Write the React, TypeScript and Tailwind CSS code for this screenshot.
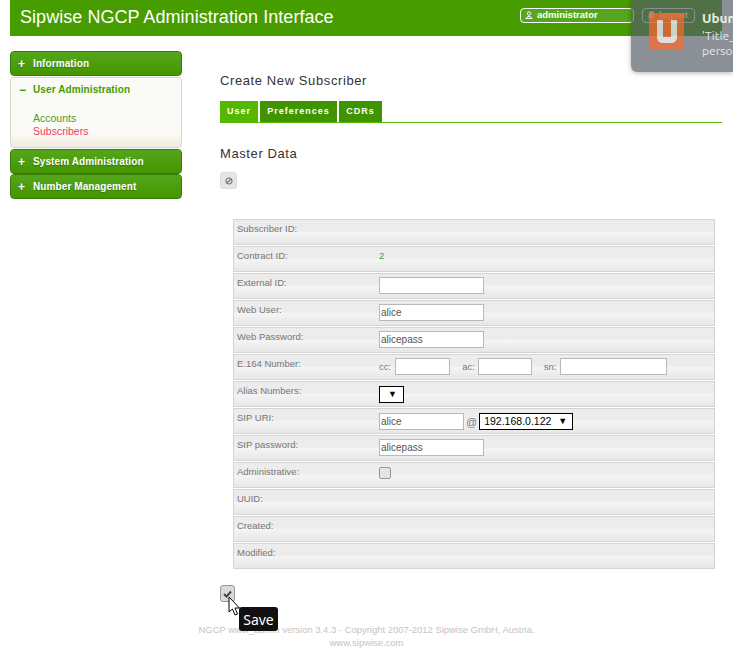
const font = "[font-family:'Liberation_Sans',Arial,sans-serif]";

function SideHead({ label }: { label: string }) {
  return (
    <div className="flex h-[25px] items-center rounded-[4px] border border-[#3a7d05] bg-[linear-gradient(#55a61c,#439600)] text-[10px] font-bold tracking-[0.1px] text-white [text-shadow:0_1px_1px_rgba(0,0,0,0.25)]">
      <span className="w-[22px] pl-[7px] text-[12px]">+</span>
      <span>{label}</span>
    </div>
  );
}

function Row({ label, children }: { label: string; children?: React.ReactNode }) {
  return (
    <div className="flex h-[26px] border border-[#d4d4d4] bg-[linear-gradient(#ececec_0%,#ececec_45%,#f4f4f4_52%,#e7e7e7_100%)] text-[9.5px] text-[#777]">
      <div className="w-[142px] pl-[3px] pt-[2px]">{label}</div>
      <div className="flex items-start pl-[3px] pt-[3px]">{children}</div>
    </div>
  );
}

function Field({ value, w }: { value?: string; w: string }) {
  return (
    <input
      readOnly
      value={value ?? ""}
      className={`h-[17px] border border-[#b8b8b8] bg-white px-px text-[10px] text-[#555] outline-none ${w}`}
    />
  );
}

export default function App() {
  return (
    <div className={`relative h-[652px] w-[733px] overflow-hidden bg-white ${font}`}>
      <header className="ml-[10px] flex h-[36px] w-[712px] items-center justify-between bg-[#479c00] pb-[2px] pl-[10px] pr-[27px]">
        <h1 className="text-[18px] tracking-[0.05px] text-white">Sipwise NGCP Administration Interface</h1>
        <div className="mb-[4px] flex gap-[8px] text-[9.5px] font-bold text-white">
          <div className="flex h-[15px] w-[114px] items-center gap-[4px] rounded-[4px] border border-white bg-[#55a61c] pl-[4px]">
            <UserIcon />
            administrator
          </div>
          <div className="flex h-[15px] w-[53px] items-center gap-[4px] rounded-[4px] border border-white pl-[5px]">
            <LockIcon />
            logout
          </div>
        </div>
      </header>

      <div className="flex">
        <aside className="ml-[10px] mt-[15px] w-[172px]">
          <SideHead label="Information" />
          <div className="mt-px h-[71px] rounded-[4px] border border-[#ddd6c4] bg-[linear-gradient(#fafaf6_80%,#f1ece0)] text-[10.5px]">
            <div className="flex h-[23px] items-center text-[10px] font-bold tracking-[0.1px] text-[#479c00]">
              <span className="w-[22px] pl-[8px] text-[12px]">−</span>
              <span>User Administration</span>
            </div>
            <div className="pl-[22px] pt-[11px] leading-[13px]">
              <div className="text-[#4f9a2c]">Accounts</div>
              <div className="text-[#ee3b60]">Subscribers</div>
            </div>
          </div>
          <div className="mt-px">
            <SideHead label="System Administration" />
          </div>
          <SideHead label="Number Management" />
        </aside>

        <main className="ml-[38px] w-[502px] pt-[37px]">
          <h2 className="text-[13px] leading-[15px] tracking-[0.6px] text-[#333]">Create New Subscriber</h2>
          <nav className="mt-[13px] flex h-[22px] border-b border-[#55b800] text-[9px] font-bold tracking-[1px] text-white">
            <span className="flex h-[21px] w-[38px] items-center justify-center bg-[#55b800]">User</span>
            <span className="ml-[2px] flex h-[21px] w-[77px] items-center justify-center bg-[#3f9400]">Preferences</span>
            <span className="ml-[2px] flex h-[21px] w-[43px] items-center justify-center bg-[#3f9400]">CDRs</span>
          </nav>
          <h3 className="mt-[23px] text-[13px] leading-[15px] tracking-[0.6px] text-[#333]">Master Data</h3>
          <div className="mt-[11px] flex h-[17px] w-[17px] items-center justify-center rounded-[3px] border border-[#ddd] bg-[#e6e6e6] text-[9px] text-[#777]">
            <BanIcon />
          </div>

          <section className="ml-[13px] mt-[30px] flex w-[482px] flex-col gap-px">
            <Row label="Subscriber ID:" />
            <Row label="Contract ID:">
              <span className="-mt-px text-[#4f9a2c]">2</span>
            </Row>
            <Row label="External ID:">
              <Field w="w-[105px]" />
            </Row>
            <Row label="Web User:">
              <Field value="alice" w="w-[105px]" />
            </Row>
            <Row label="Web Password:">
              <Field value="alicepass" w="w-[105px]" />
            </Row>
            <Row label="E.164 Number:">
              <span className="mr-[4px] mt-[2px]">cc:</span>
              <Field w="w-[55px]" />
              <span className="ml-[12px] mr-[3px] mt-[2px]">ac:</span>
              <Field w="w-[54px]" />
              <span className="ml-[12px] mr-[3px] mt-[2px]">sn:</span>
              <Field w="w-[107px]" />
            </Row>
            <Row label="Alias Numbers:">
              <div className="mt-px flex h-[17px] w-[25px] items-center justify-end border border-black bg-white pr-[6px] text-[9px] text-black">▼</div>
            </Row>
            <Row label="SIP URI:">
              <div className="mt-px flex items-start">
                <Field value="alice" w="w-[85px]" />
                <span className="ml-[2px] mr-[2px] mt-px text-[11px]">@</span>
                <div className="flex h-[17px] w-[94px] items-center justify-between border border-black bg-white pl-[4px] pr-[5px] text-[10.5px] text-black">
                  192.168.0.122<span className="text-[9px]">▼</span>
                </div>
              </div>
            </Row>
            <Row label="SIP password:">
              <Field value="alicepass" w="w-[105px]" />
            </Row>
            <Row label="Administrative:">
              <span className="mt-px h-[12px] w-[12px] rounded-[2px] border border-[#999] bg-[#e4e4e4]" />
            </Row>
            <Row label="UUID:" />
            <Row label="Created:" />
            <Row label="Modified:" />
          </section>

          <div className="mt-[16px] flex h-[17px] w-[15px] items-center justify-center rounded-[3px] border border-[#999] bg-[#d9d9d9]">
            <CheckIcon />
          </div>
        </main>
      </div>

      <footer className="mt-[21px] text-center text-[9.45px] leading-[13px] text-[#c4c4c4]">
        <div>NGCP www_admin version 3.4.3 - Copyright 2007-2012 Sipwise GmbH, Austria.</div>
        <div>www.sipwise.com</div>
      </footer>

      {/* notification bubble sits over the header */}
      <div className="absolute right-0 top-0 h-[72px] w-[102px] rounded-bl-[6px] bg-[rgba(84,91,102,0.68)] shadow-[0_1px_5px_rgba(0,0,0,0.3)] [font-family:Ubuntu,'Noto_Sans',sans-serif]">
        <div className="absolute left-[18px] top-[13px] flex h-[36px] w-[35px] items-start justify-center rounded-[1px] bg-[#ff6a2a] opacity-70">
          <div className="mt-[7px] h-[23px] w-[20px] rounded-b-[6px] border-x-[6px] border-b-[6px] border-white" />
        </div>
        <div className="absolute left-[71px] top-[9px] w-[31px] overflow-hidden whitespace-nowrap text-[13.5px] font-bold leading-[18px] text-[#e8efe0]">Ubuntu</div>
        <div className="absolute left-[71px] top-[28px] w-[31px] overflow-hidden whitespace-nowrap text-[12px] leading-[15px] text-[#e4e8ea]">
          'Title_<br />person
        </div>
      </div>

      {/* hover tooltip and mouse pointer */}
      <div className="absolute left-[239px] top-[607px] flex h-[24px] w-[39px] items-center justify-center rounded-[3px] bg-[#111] text-[14px] text-white [font-family:'Noto_Sans',sans-serif]">
        Save
      </div>
      <svg className="absolute left-[228px] top-[596px]" width="13" height="20" viewBox="0 0 13 20">
        <path d="M1 1v15l3.5-3 2.5 6 2.5-1-2.5-6h4.5z" fill="#fff" stroke="#000" strokeWidth="1" strokeLinejoin="round" />
      </svg>
    </div>
  );
}

function UserIcon() {
  return (
    <svg width="8" height="8" viewBox="0 0 8 8" fill="none" stroke="#fff" strokeWidth="1">
      <circle cx="4" cy="2.5" r="1.7" />
      <path d="M0.5 7.5h7M1.5 7.5c0-1.5 1-2 2.5-2s2.5.5 2.5 2" />
    </svg>
  );
}

function LockIcon() {
  return (
    <svg width="7" height="8" viewBox="0 0 7 8" fill="#fff">
      <path d="M1 3.5V2.5a2.5 2.5 0 0 1 5 0v1h.5v4h-6v-4z" />
    </svg>
  );
}

function BanIcon() {
  return (
    <svg width="8" height="8" viewBox="0 0 8 8" fill="none" stroke="#777" strokeWidth="1.2">
      <circle cx="4" cy="4" r="3" />
      <path d="M2 6l4-4" />
    </svg>
  );
}

function CheckIcon() {
  return (
    <svg width="9" height="8" viewBox="0 0 9 8" fill="none" stroke="#444" strokeWidth="2">
      <path d="M1 4l2.5 2.5L8 1.5" />
    </svg>
  );
}
